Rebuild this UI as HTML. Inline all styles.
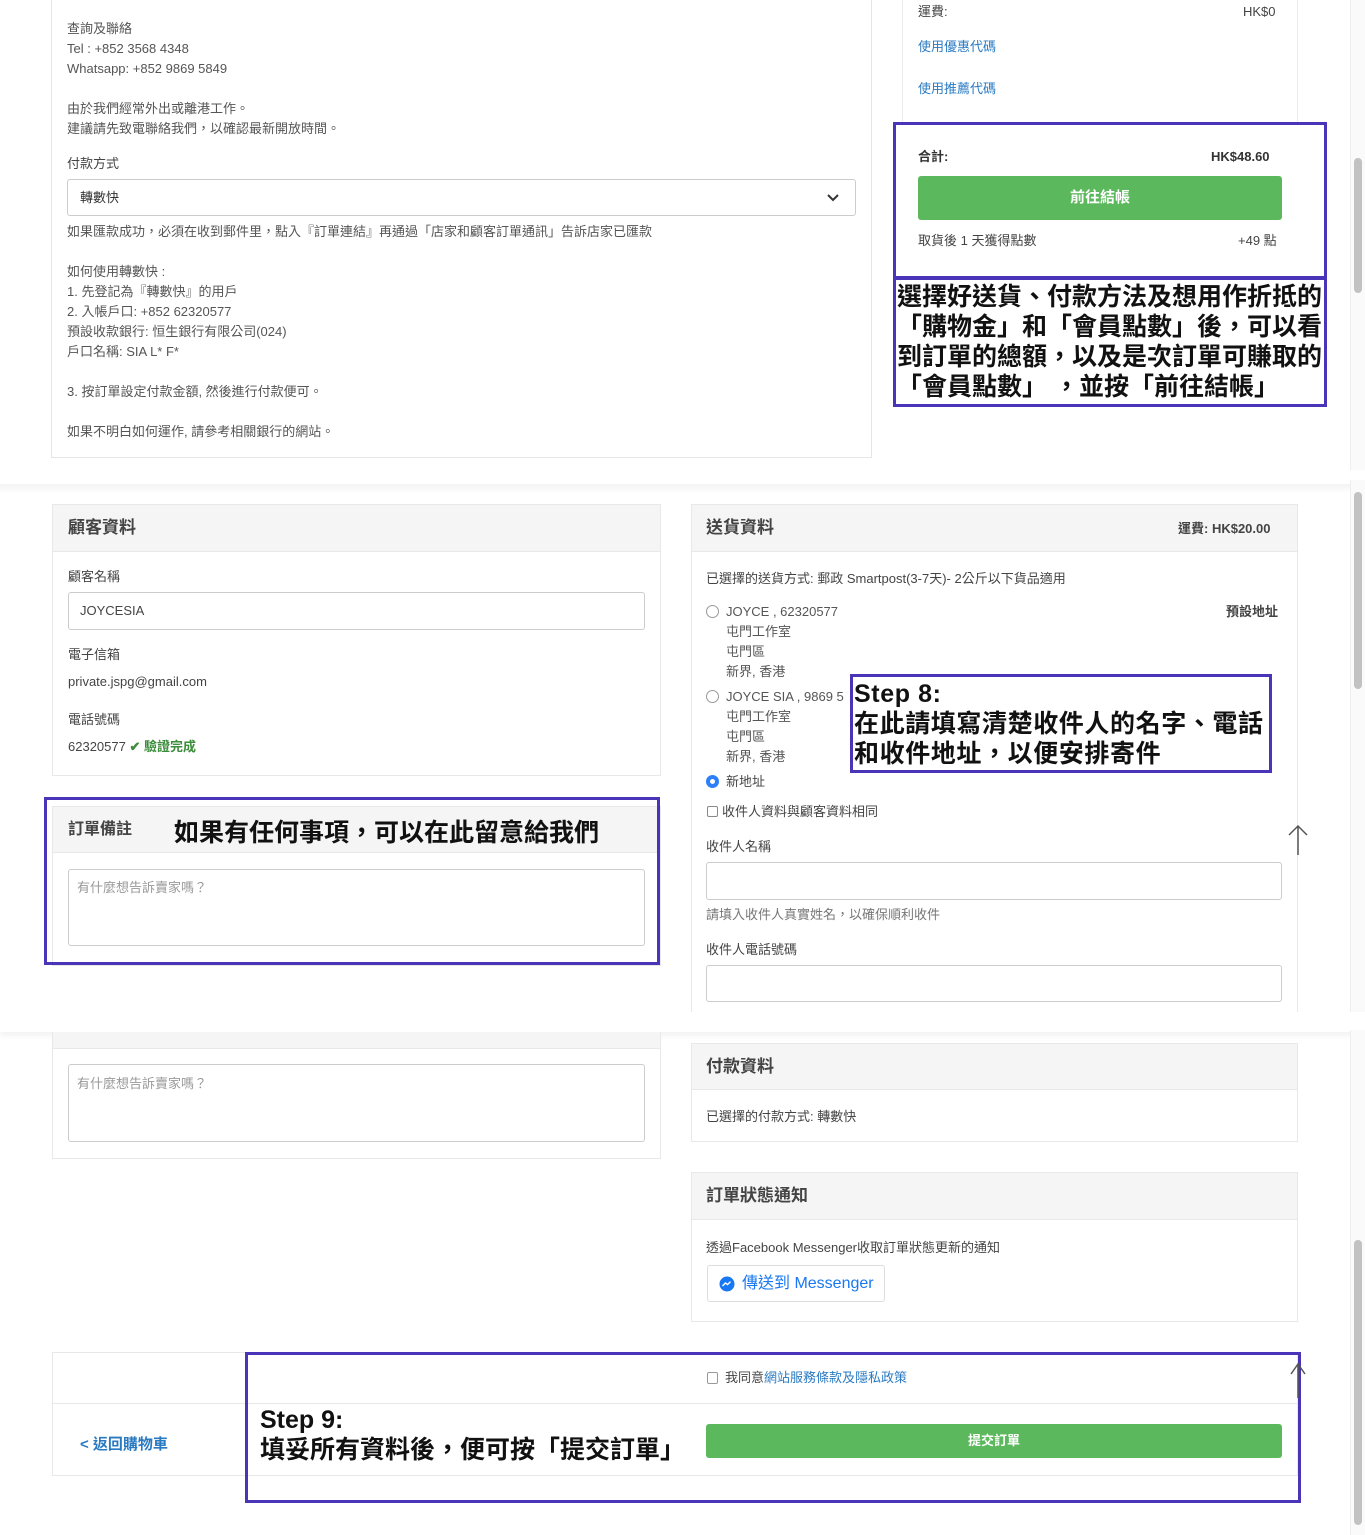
<!DOCTYPE html>
<html><head><meta charset="utf-8">
<style>
*{margin:0;padding:0;box-sizing:border-box}
body{width:1365px;height:1535px;position:relative;background:#fff;overflow:hidden;font-family:"Liberation Sans","Noto Sans CJK TC",sans-serif;color:#555;font-size:13px}
.a{position:absolute}
.t{position:absolute;white-space:nowrap;line-height:16px}
.card{position:absolute;border:1px solid #e8e8e8;background:#fff}
.hd{position:absolute;background:#f5f5f5;border-bottom:1px solid #e8e8e8}
.h{font-size:17px;font-weight:bold;color:#444}
.inp{position:absolute;border:1px solid #ccc;border-radius:3px;background:#fff}
.pb{position:absolute;border:3px solid #4a35b8}
.big{position:absolute;font-size:25px;font-weight:bold;color:#111;white-space:nowrap;line-height:30px;font-family:"Liberation Sans","Noto Sans CJK TC",sans-serif}
.blue{color:#2a7ac2}
.b{font-weight:bold}
.sb{position:absolute;left:1350px;width:15px;background:#fafafa;border-left:1px solid #eee}
.th{position:absolute;left:1354px;width:8px;background:#c2c2c2;border-radius:4px}
.radio{position:absolute;width:13px;height:13px;border:1px solid #999;border-radius:50%;background:#fff}
</style></head><body>

<!-- Section 1 -->
<div class="a" style="left:51px;top:-2px;width:821px;height:460px;border:1px solid #e6e6e6;border-top:none"></div>
<div class="t" style="left:67px;top:21px">查詢及聯絡</div>
<div class="t" style="left:67px;top:41px">Tel : +852 3568 4348</div>
<div class="t" style="left:67px;top:61px">Whatsapp: +852 9869 5849</div>
<div class="t" style="left:67px;top:101px">由於我們經常外出或離港工作。</div>
<div class="t" style="left:67px;top:121px">建議請先致電聯絡我們，以確認最新開放時間。</div>
<div class="t" style="left:67px;top:156px;color:#444">付款方式</div>
<div class="inp" style="left:67px;top:179px;width:789px;height:37px"></div>
<div class="t" style="left:80px;top:190px;color:#333">轉數快</div>
<svg class="a" style="left:826px;top:192px" width="14" height="12" viewBox="0 0 14 12"><path d="M2 3l5 5 5-5" stroke="#333" stroke-width="2" fill="none"/></svg>
<div class="t" style="left:67px;top:224px">如果匯款成功，必須在收到郵件里，點入『訂單連結』再通過「店家和顧客訂單通訊」告訴店家已匯款</div>
<div class="t" style="left:67px;top:264px">如何使用轉數快 :</div>
<div class="t" style="left:67px;top:284px">1. 先登記為『轉數快』的用戶</div>
<div class="t" style="left:67px;top:304px">2. 入帳戶口: +852 62320577</div>
<div class="t" style="left:67px;top:324px">預設收款銀行: 恒生銀行有限公司(024)</div>
<div class="t" style="left:67px;top:344px">戶口名稱: SIA L* F*</div>
<div class="t" style="left:67px;top:384px">3. 按訂單設定付款金額, 然後進行付款便可。</div>
<div class="t" style="left:67px;top:424px">如果不明白如何運作, 請參考相關銀行的網站。</div>

<div class="a" style="left:902px;top:-2px;width:396px;height:300px;border:1px solid #ececec;border-top:none"></div>
<div class="t" style="left:918px;top:4px;color:#444">運費:</div>
<div class="t" style="left:1243px;top:4px;color:#444">HK$0</div>
<div class="t blue" style="left:918px;top:39px">使用優惠代碼</div>
<div class="t blue" style="left:918px;top:81px">使用推薦代碼</div>
<div class="pb" style="left:893px;top:122px;width:434px;height:157px;background:#fff"></div>
<div class="t b" style="left:918px;top:149px;color:#333">合計:</div>
<div class="t b" style="left:1211px;top:149px;color:#333">HK$48.60</div>
<div class="a" style="left:918px;top:176px;width:364px;height:44px;background:#5cb85c;border-radius:3px;color:#fff;font-weight:bold;font-size:15px;text-align:center;line-height:44px">前往結帳</div>
<div class="t" style="left:918px;top:233px;color:#444">取貨後 1 天獲得點數</div>
<div class="t" style="left:1238px;top:233px;color:#444">+49 點</div>
<div class="pb" style="left:893px;top:277px;width:434px;height:130px;background:#fff"></div>
<div class="big" style="left:897px;top:282px">選擇好送貨、付款方法及想用作折抵的<br>「購物金」和「會員點數」後，可以看<br>到訂單的總額，以及是次訂單可賺取的<br>「會員點數」 ，並按「前往結帳」</div>
<div class="sb" style="top:0;height:470px"></div>
<div class="th" style="top:158px;height:135px"></div>

<!-- Section 2 -->
<div class="a" style="left:0;top:484px;width:1365px;height:10px;background:linear-gradient(#f3f3f3,#fff)"></div>
<div class="card" style="left:52px;top:504px;width:609px;height:272px"></div>
<div class="hd" style="left:53px;top:505px;width:607px;height:47px"></div>
<div class="t h" style="left:68px;top:520px">顧客資料</div>
<div class="t" style="left:68px;top:569px;color:#444">顧客名稱</div>
<div class="inp" style="left:68px;top:592px;width:577px;height:38px"></div>
<div class="t" style="left:80px;top:603px;color:#444">JOYCESIA</div>
<div class="t" style="left:68px;top:647px;color:#444">電子信箱</div>
<div class="t" style="left:68px;top:674px;color:#444">private.jspg@gmail.com</div>
<div class="t" style="left:68px;top:712px;color:#444">電話號碼</div>
<div class="t" style="left:68px;top:739px;color:#444">62320577 <span style="color:#3c8d3c;font-weight:bold">✔ 驗證完成</span></div>

<div class="card" style="left:52px;top:806px;width:609px;height:160px"></div>
<div class="hd" style="left:53px;top:807px;width:604px;height:46px"></div>
<div class="t" style="left:68px;top:822px;font-size:16px;font-weight:bold;color:#444">訂單備註</div>
<div class="big" style="left:174px;top:818px">如果有任何事項，可以在此留意給我們</div>
<div class="inp" style="left:68px;top:869px;width:577px;height:77px"></div>
<div class="t" style="left:77px;top:880px;color:#999">有什麼想告訴賣家嗎？</div>
<div class="pb" style="left:44px;top:797px;width:616px;height:168px"></div>

<div class="card" style="left:691px;top:504px;width:607px;height:520px"></div>
<div class="hd" style="left:692px;top:505px;width:605px;height:47px"></div>
<div class="t h" style="left:706px;top:520px">送貨資料</div>
<div class="t b" style="left:1178px;top:521px;color:#444">運費: HK$20.00</div>
<div class="t" style="left:706px;top:571px;color:#444">已選擇的送貨方式: 郵政 Smartpost(3-7天)- 2公斤以下貨品適用</div>
<div class="radio" style="left:706px;top:605px"></div>
<div class="t" style="left:726px;top:604px">JOYCE , 62320577</div>
<div class="t b" style="left:1226px;top:604px;color:#444">預設地址</div>
<div class="t" style="left:726px;top:624px">屯門工作室</div>
<div class="t" style="left:726px;top:644px">屯門區</div>
<div class="t" style="left:726px;top:664px">新界, 香港</div>
<div class="radio" style="left:706px;top:690px"></div>
<div class="t" style="left:726px;top:689px">JOYCE SIA , 9869 5</div>
<div class="t" style="left:726px;top:709px">屯門工作室</div>
<div class="t" style="left:726px;top:729px">屯門區</div>
<div class="t" style="left:726px;top:749px">新界, 香港</div>
<div class="radio" style="left:706px;top:775px;border:4px solid #2d7ff9"></div>
<div class="t" style="left:726px;top:774px;color:#444">新地址</div>
<div class="a" style="left:707px;top:806px;width:11px;height:11px;border:1px solid #888;border-radius:2px"></div>
<div class="t" style="left:722px;top:804px;color:#444">收件人資料與顧客資料相同</div>
<div class="t" style="left:706px;top:839px;color:#444">收件人名稱</div>
<div class="inp" style="left:706px;top:862px;width:576px;height:38px"></div>
<div class="t" style="left:706px;top:907px;color:#777">請填入收件人真實姓名，以確保順利收件</div>
<div class="t" style="left:706px;top:942px;color:#444">收件人電話號碼</div>
<div class="inp" style="left:706px;top:965px;width:576px;height:37px"></div>
<div class="pb" style="left:850px;top:674px;width:422px;height:99px;background:#fff"></div>
<div class="big" style="left:854px;top:679px;line-height:30px;letter-spacing:0.6px">Step 8:<br>在此請填寫清楚收件人的名字、電話<br>和收件地址，以便安排寄件</div>
<svg class="a" style="left:1288px;top:824px" width="20" height="32" viewBox="0 0 20 32"><path d="M10 31V2M1 11l9-9 9 9" stroke="#555" stroke-width="1.5" fill="none"/></svg>
<div class="sb" style="top:480px;height:532px"></div>
<div class="th" style="top:492px;height:197px"></div>

<!-- Section 3 -->
<div class="a" style="left:0;top:1012px;width:1365px;height:20px;background:#fff;box-shadow:0 4px 6px rgba(0,0,0,0.05)"></div>
<div class="card" style="left:52px;top:1032px;width:609px;height:127px;border-top:none"></div>
<div class="hd" style="left:53px;top:1032px;width:607px;height:17px"></div>
<div class="inp" style="left:68px;top:1064px;width:577px;height:78px"></div>
<div class="t" style="left:77px;top:1076px;color:#999">有什麼想告訴賣家嗎？</div>

<div class="card" style="left:691px;top:1043px;width:607px;height:99px"></div>
<div class="hd" style="left:692px;top:1044px;width:605px;height:46px"></div>
<div class="t h" style="left:706px;top:1059px">付款資料</div>
<div class="t" style="left:706px;top:1109px;color:#444">已選擇的付款方式: 轉數快</div>

<div class="card" style="left:691px;top:1172px;width:607px;height:150px"></div>
<div class="hd" style="left:692px;top:1173px;width:605px;height:47px"></div>
<div class="t h" style="left:706px;top:1188px">訂單狀態通知</div>
<div class="t" style="left:706px;top:1240px;color:#444">透過Facebook Messenger收取訂單狀態更新的通知</div>
<div class="a" style="left:707px;top:1265px;width:178px;height:37px;border:1px solid #ddd;border-radius:3px"></div>
<svg class="a" style="left:719px;top:1276px" width="16" height="16" viewBox="0 0 16 16"><circle cx="8" cy="8" r="7.5" fill="#1877f2"/><path d="M3.5 10l3-3 2 1.6 3-3-3 3-2-1.6z" stroke="#fff" stroke-width="1.4" fill="none"/></svg>
<div class="t" style="left:742px;top:1275px;font-size:16px;color:#1877f2;line-height:18px">傳送到 Messenger</div>

<div class="card" style="left:52px;top:1352px;width:1246px;height:124px"></div>
<div class="a" style="left:53px;top:1403px;width:1244px;height:1px;background:#e8e8e8"></div>
<div class="a" style="left:707px;top:1372px;width:11px;height:12px;border:1px solid #999;border-radius:2px"></div>
<div class="t" style="left:725px;top:1370px;color:#444">我同意<span class="blue">網站服務條款及隱私政策</span></div>
<div class="t blue" style="left:80px;top:1436px;font-size:15px;line-height:18px;font-weight:bold">&lt; 返回購物車</div>
<div class="a" style="left:706px;top:1424px;width:576px;height:34px;background:#5cb85c;border-radius:3px;color:#fff;font-weight:bold;font-size:13px;text-align:center;line-height:34px">提交訂單</div>
<div class="pb" style="left:245px;top:1352px;width:1056px;height:151px"></div>
<div class="big" style="left:260px;top:1405px;line-height:30px">Step 9:<br>填妥所有資料後，便可按「提交訂單」</div>
<svg class="a" style="left:1288px;top:1362px" width="20" height="36" viewBox="0 0 20 36"><path d="M10 36V2M3 12l7-10 7 10" stroke="#555" stroke-width="1.5" fill="none"/></svg>
<div class="sb" style="top:1030px;height:505px"></div>
<div class="th" style="top:1240px;height:285px"></div>
</body></html>
